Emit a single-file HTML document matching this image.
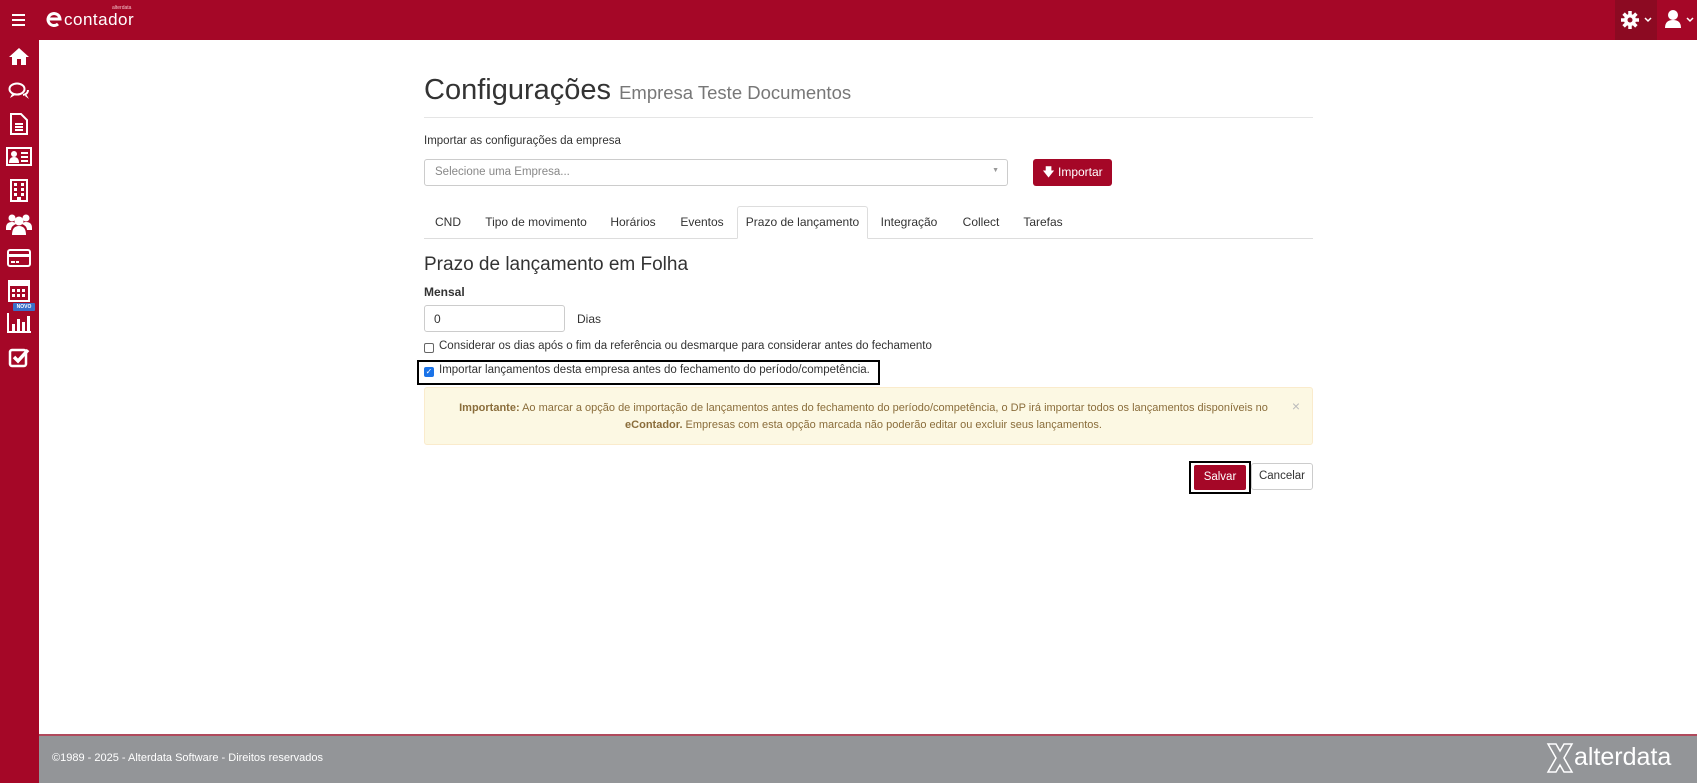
<!DOCTYPE html>
<html><head><meta charset="utf-8"><style>
*{box-sizing:border-box;margin:0;padding:0}
body{width:1697px;height:783px;position:relative;overflow:hidden;background:#fff;font-family:"Liberation Sans",sans-serif;color:#333;font-size:12px}
.hdr{position:absolute;left:0;top:0;width:1697px;height:40px;background:#a50727}
.side{position:absolute;left:0;top:40px;width:39px;height:743px;background:#a50727}
.foot{position:absolute;left:39px;top:734px;width:1658px;height:49px;background:#939598;border-top:2px solid #b04a5c}
.a{position:absolute}
.tab{position:absolute;top:206px;height:32px;line-height:32px;font-size:12px;color:#333;text-align:center}
svg{position:absolute}
</style></head><body>
<div class="hdr"></div>
<div class="side"></div>
<div class="a" style="left:12px;top:14px;width:13px;height:2px;background:#fff"></div>
<div class="a" style="left:12px;top:19px;width:13px;height:2px;background:#fff"></div>
<div class="a" style="left:12px;top:24px;width:13px;height:2px;background:#fff"></div>
<svg style="left:45px;top:10px" width="18" height="18" viewBox="0 0 18 18"><path d="M3 9 H15 A6 6 0 1 0 13 14" fill="none" stroke="#fff" stroke-width="3"/></svg>
<div class="a" style="left:64px;top:10px;color:#fff;font-size:17px;line-height:20px;letter-spacing:0.5px">contador</div>
<div class="a" style="left:112px;top:5px;color:#f3c0c8;font-size:5px">alterdata</div>
<div class="a" style="left:1615px;top:0;width:42px;height:40px;background:#8c0a22"></div>
<svg style="left:1620px;top:10px" width="20" height="20" viewBox="0 0 20 20"><circle cx="10" cy="10" r="6" fill="#fff"/><g stroke="#fff" stroke-width="3.5"><line x1="10" y1="1" x2="10" y2="19"/><line x1="1" y1="10" x2="19" y2="10"/><line x1="3.6" y1="3.6" x2="16.4" y2="16.4"/><line x1="16.4" y1="3.6" x2="3.6" y2="16.4"/></g><circle cx="10" cy="10" r="2.5" fill="#8c0a22"/></svg>
<svg style="left:1644px;top:17px" width="8" height="6" viewBox="0 0 8 6"><path d="M1 1 L4 4 L7 1" fill="none" stroke="#fff" stroke-width="1.5"/></svg>
<svg style="left:1664px;top:9px" width="18" height="20" viewBox="0 0 18 20"><circle cx="9" cy="6" r="5" fill="#fff"/><path d="M1 19 Q1 11 9 11 Q17 11 17 19Z" fill="#fff"/></svg>
<svg style="left:1686px;top:17px" width="8" height="6" viewBox="0 0 8 6"><path d="M1 1 L4 4 L7 1" fill="none" stroke="#fff" stroke-width="1.5"/></svg>
<svg style="left:8px;top:46px" width="22" height="20" viewBox="0 0 22 20"><path d="M11 2 L1 11 H4 V19 H9 V13 H13 V19 H18 V11 H21Z" fill="#fff"/></svg>
<svg style="left:8px;top:81px" width="22" height="20" viewBox="0 0 22 20"><ellipse cx="9" cy="8" rx="7.5" ry="5.5" fill="none" stroke="#fff" stroke-width="2"/><path d="M4 13 L2 17 L8 13.5" fill="#fff"/><path d="M15 14 Q20 13 20 9" fill="none" stroke="#fff" stroke-width="2"/><path d="M17 15 L21 18 L18 13" fill="#fff"/></svg>
<svg style="left:9px;top:113px" width="20" height="22" viewBox="0 0 20 22"><path d="M2 1 H12 L18 7 V21 H2Z" fill="none" stroke="#fff" stroke-width="2"/><g stroke="#fff" stroke-width="2"><line x1="6" y1="11" x2="14" y2="11"/><line x1="6" y1="14" x2="14" y2="14"/><line x1="6" y1="17" x2="14" y2="17"/></g></svg>
<svg style="left:6px;top:147px" width="26" height="20" viewBox="0 0 26 20"><rect x="1" y="1" width="24" height="17" fill="none" stroke="#fff" stroke-width="2"/><circle cx="8" cy="7" r="3" fill="#fff"/><path d="M3 16 Q3 10 8 10 Q13 10 13 16Z" fill="#fff"/><g stroke="#fff" stroke-width="2"><line x1="15" y1="6" x2="22" y2="6"/><line x1="15" y1="10" x2="22" y2="10"/><line x1="15" y1="14" x2="22" y2="14"/></g></svg>
<svg style="left:9px;top:179px" width="20" height="23" viewBox="0 0 20 23"><rect x="2" y="1" width="16" height="21" fill="none" stroke="#fff" stroke-width="2"/><g fill="#fff"><rect x="5" y="4" width="3" height="3"/><rect x="12" y="4" width="3" height="3"/><rect x="5" y="9" width="3" height="3"/><rect x="12" y="9" width="3" height="3"/><rect x="5" y="14" width="3" height="3"/><rect x="12" y="14" width="3" height="3"/><rect x="8" y="18" width="4" height="4"/></g></svg>
<svg style="left:6px;top:213px" width="26" height="22" viewBox="0 0 26 22"><g fill="#fff"><circle cx="6" cy="5" r="3.5"/><circle cx="20" cy="5" r="3.5"/><circle cx="13" cy="8" r="4.5"/><path d="M0 15 Q0 9 6 9 Q9 9 10 11 Q5 13 5 17H0Z"/><path d="M26 15 Q26 9 20 9 Q17 9 16 11 Q21 13 21 17H26Z"/><path d="M6 22 Q6 13 13 13 Q20 13 20 22Z"/></g></svg>
<svg style="left:7px;top:248px" width="24" height="20" viewBox="0 0 24 20"><rect x="1" y="2" width="22" height="16" rx="2" fill="none" stroke="#fff" stroke-width="2"/><rect x="1" y="6" width="22" height="3" fill="#fff"/><rect x="4" y="13" width="4" height="2" fill="#fff"/><rect x="9" y="13" width="3" height="2" fill="#fff"/></svg>
<svg style="left:8px;top:280px" width="22" height="22" viewBox="0 0 22 22"><rect x="1" y="1" width="20" height="20" fill="none" stroke="#fff" stroke-width="2"/><rect x="1" y="1" width="20" height="5" fill="#fff"/><g fill="#fff"><rect x="4" y="9" width="3" height="3"/><rect x="9" y="9" width="3" height="3"/><rect x="14" y="9" width="3" height="3"/><rect x="4" y="14" width="3" height="3"/><rect x="9" y="14" width="3" height="3"/><rect x="14" y="14" width="3" height="3"/></g></svg>
<div class="a" style="left:13px;top:303px;width:22px;height:8px;background:#3b6fc9;color:#fff;font-size:5px;font-weight:bold;line-height:8px;text-align:center;border-radius:1px">NOVO</div>
<svg style="left:6px;top:312px" width="26" height="22" viewBox="0 0 26 22"><path d="M2 1 V20 H25" fill="none" stroke="#fff" stroke-width="2"/><g fill="#fff"><rect x="6" y="12" width="3" height="7"/><rect x="11" y="7" width="3" height="12"/><rect x="16" y="10" width="3" height="9"/><rect x="21" y="4" width="3" height="15"/></g></svg>
<svg style="left:8px;top:346px" width="22" height="22" viewBox="0 0 22 22"><rect x="2" y="4" width="16" height="16" rx="2" fill="none" stroke="#fff" stroke-width="2.5"/><path d="M6 11 L10 15 L20 4" fill="none" stroke="#fff" stroke-width="3.5"/></svg>

<div class="a" style="left:424px;top:72px;font-size:29px;color:#333;white-space:nowrap;line-height:36px">Configurações <span style="font-size:18.5px;color:#777">Empresa Teste Documentos</span></div>
<div class="a" style="left:424px;top:117px;width:889px;height:1px;background:#e5e5e5"></div>
<div class="a" style="left:424px;top:135px;font-size:11.5px">Importar as configurações da empresa</div>
<div class="a" style="left:424px;top:159px;width:584px;height:27px;border:1px solid #ccc;border-radius:3px;font-size:11.5px;color:#888;padding:6px 10px">Selecione uma Empresa...<span style="position:absolute;right:8px;top:7px;font-size:7px;color:#999">▼</span></div>
<div class="a" style="left:1033px;top:159px;width:79px;height:27px;background:#a50727;border-radius:3px;color:#fff;font-size:12px;line-height:27px;text-align:center">🡇 Importar</div>
<div class="a" style="left:424px;top:238px;width:889px;height:1px;background:#ddd"></div>
<div class="a" style="left:737px;top:206px;width:131px;height:33px;border:1px solid #ddd;border-bottom:1px solid #fff;border-radius:3px 3px 0 0;background:#fff"></div>
<div class="tab" style="left:428px;width:40px">CND</div>
<div class="tab" style="left:481px;width:110px">Tipo de movimento</div>
<div class="tab" style="left:603px;width:60px">Horários</div>
<div class="tab" style="left:672px;width:60px">Eventos</div>
<div class="tab" style="left:737px;width:131px">Prazo de lançamento</div>
<div class="tab" style="left:874px;width:70px">Integração</div>
<div class="tab" style="left:951px;width:60px">Collect</div>
<div class="tab" style="left:1013px;width:60px">Tarefas</div>
<div class="a" style="left:424px;top:254px;font-size:19px;color:#333">Prazo de lançamento em Folha</div>
<div class="a" style="left:424px;top:285px;font-size:12px;font-weight:bold">Mensal</div>
<div class="a" style="left:424px;top:305px;width:141px;height:27px;border:1px solid #ccc;border-radius:3px;padding:6px 9px;font-size:12px">0</div>
<div class="a" style="left:577px;top:312px;font-size:12px">Dias</div>
<div class="a" style="left:424px;top:343px;width:10px;height:10px;border:1px solid #666;border-radius:2px"></div>
<div class="a" style="left:439px;top:340px;font-size:11.5px">Considerar os dias após o fim da referência ou desmarque para considerar antes do fechamento</div>
<div class="a" style="left:417px;top:360px;width:463px;height:25px;border:2.5px solid #000"></div>
<div class="a" style="left:424px;top:367px;width:10px;height:10px;background:#1a73e8;border-radius:2px;color:#fff;font-size:8px;line-height:10px;text-align:center">✓</div>
<div class="a" style="left:439px;top:364px;font-size:11.5px">Importar lançamentos desta empresa antes do fechamento do período/competência.</div>
<div class="a" style="left:424px;top:387px;width:889px;height:58px;background:#fcf8e3;border:1px solid #faebcc;border-radius:3px;color:#8a6d3b;font-size:11px;text-align:center;line-height:17px;padding:12px 20px 0 10px;white-space:nowrap"><b>Importante:</b> Ao marcar a opção de importação de lançamentos antes do fechamento do período/competência, o DP irá importar todos os lançamentos disponíveis no<br><b>eContador.</b> Empresas com esta opção marcada não poderão editar ou excluir seus lançamentos.<span style="position:absolute;right:12px;top:10px;color:#bbb;font-size:14px">×</span></div>
<div class="a" style="left:1189px;top:461px;width:62px;height:33px;border:2.5px solid #000"></div>
<div class="a" style="left:1194px;top:465px;width:52px;height:25px;background:#a50727;border-radius:2px;color:#fff;font-size:11.5px;line-height:25px;text-align:center">Salvar</div>
<div class="a" style="left:1251px;top:463px;width:62px;height:27px;border:1px solid #ccc;border-radius:3px;font-size:11.5px;line-height:25px;text-align:center">Cancelar</div>

<div class="foot"></div>
<div class="a" style="left:52px;top:752px;color:#fff;font-size:11px">©1989 - 2025 - Alterdata Software - Direitos reservados</div>
<svg style="left:1546px;top:742px" width="28" height="32" viewBox="0 0 28 32"><path d="M2 2 H10 L14 9 L18 2 H26 L18 16 L26 30 H18 L14 23 L10 30 H2 L10 16Z" fill="none" stroke="#fff" stroke-width="1.5"/></svg>
<div class="a" style="left:1574px;top:741px;color:#fff;font-size:25px;line-height:32px">alterdata</div>
</body></html>
